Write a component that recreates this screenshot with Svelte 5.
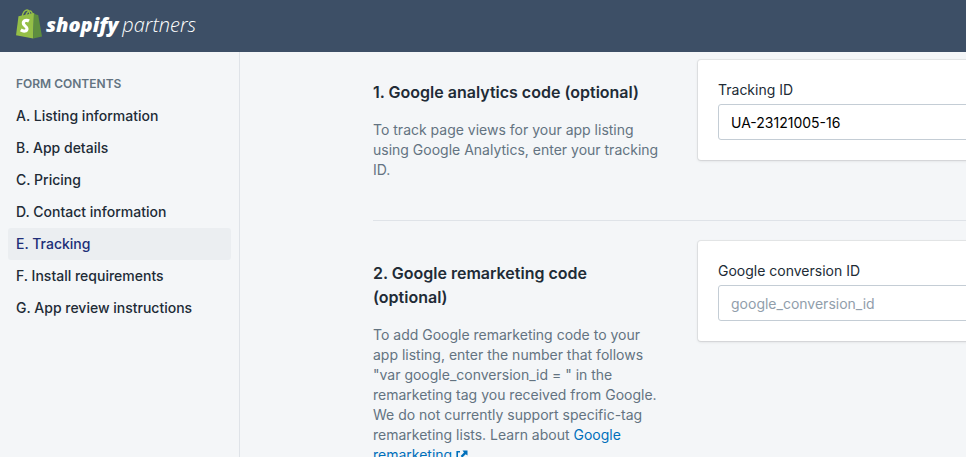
<script>
	let trackingId = 'UA-23121005-16';
	let conversionId = '';
	let current = 'tracking';

	const contents = [
		{ id: 'listing', label: 'A. Listing information' },
		{ id: 'details', label: 'B. App details' },
		{ id: 'pricing', label: 'C. Pricing' },
		{ id: 'contact', label: 'D. Contact information' },
		{ id: 'tracking', label: 'E. Tracking' },
		{ id: 'install', label: 'F. Install requirements' },
		{ id: 'review', label: 'G. App review instructions' }
	];
</script>

<div class="frame">
	<header>
		<a class="logo" href="#home">
			<svg class="bag" width="26" height="30" viewBox="0 0 26 30" aria-hidden="true">
				<path
					d="M6 8.500C6.600 4.200 8.800 1.200 11 1c2-.1 2.800 2.200 2.900 5.500M9.600 7.500c.8-3.300 2.500-5.500 4.400-5.500 1.400 0 2.200 1.500 2.500 4"
					fill="none"
					stroke="#95bf47"
					stroke-width="1.300"
				/>
				<path d="M2.500 7.300 18 4 17.200 29.500 0 26.300z" fill="#95bf47" />
				<path d="M18 4 19.700 5.600l2.500.3L26 27.600 17.200 29.500z" fill="#5e8e3e" />
				<path
					d="M13 12c-2.300-1.300-5.500-.6-5.700 2-.2 2.900 3.900 3.300 3.700 5.900-.2 2.400-3.400 2.800-6.200 1"
					fill="none"
					stroke="#fff"
					stroke-width="3.200"
				/>
			</svg>
			<span class="shopify">shopify</span>
			<span class="partners">partners</span>
		</a>
	</header>

	<div class="body">
		<nav aria-labelledby="contents-title">
			<h2 id="contents-title">Form contents</h2>
			<ul>
				{#each contents as item}
					<li>
						<a
							href="#{item.id}"
							class:active={current === item.id}
							on:click={() => (current = item.id)}>{item.label}</a
						>
					</li>
				{/each}
			</ul>
		</nav>

		<main>
			<section>
				<div class="about">
					<h3>1. Google analytics code (optional)</h3>
					<p>
						To track page views for your app listing using Google Analytics, enter your tracking ID.
					</p>
				</div>
				<div class="card">
					<label for="tracking-id">Tracking ID</label>
					<input id="tracking-id" type="text" bind:value={trackingId} />
				</div>
			</section>

			<section>
				<div class="about">
					<h3>2. Google remarketing code (optional)</h3>
					<p>
						To add Google remarketing code to your app listing, enter the number that follows "var
						google_conversion_id = " in the remarketing tag you received from Google. We do not
						currently support specific-tag remarketing lists. Learn about
						<a href="#remarketing"
							>Google remarketing
							<svg width="12" height="12" viewBox="0 0 12 12" aria-hidden="true">
								<path
									d="M4 1.800H1.200v9h8V8"
									fill="none"
									stroke="currentColor"
									stroke-width="1.600"
								/>
								<path d="M6.500 0.500h5V5.500L9.700 4.200 6.300 7.600 4.600 5.900 8 2.500z" fill="currentColor" />
							</svg></a
						>
					</p>
				</div>
				<div class="card">
					<label for="conversion-id">Google conversion ID</label>
					<input
						id="conversion-id"
						type="text"
						placeholder="google_conversion_id"
						bind:value={conversionId}
					/>
				</div>
			</section>
		</main>
	</div>
</div>

<style>
	:global(body) {
		background: #f4f6f8;
	}
	.frame {
		display: flex;
		flex-direction: column;
		height: 100vh;
		overflow: hidden;
		color: #212b36;
		font-family: Inter, 'Liberation Sans', sans-serif;
		font-size: 14px;
		line-height: 20px;
	}
	header {
		display: flex;
		flex: none;
		align-items: center;
		height: 52px;
		padding: 0 16px 4px;
		box-sizing: border-box;
		background: #3d4f66;
	}
	.logo {
		display: flex;
		align-items: center;
		gap: 4px;
		color: white;
		font-family: 'Open Sans', sans-serif;
		font-size: 20px;
		font-style: italic;
		line-height: 30px;
		text-decoration: none;
	}
	.logo span {
		padding-top: 2px;
	}
	.bag {
		flex: none;
	}
	.shopify {
		font-weight: 800;
	}
	.partners {
		font-weight: 300;
	}
	.body {
		display: flex;
		flex: 1;
		min-height: 0;
	}
	nav {
		flex: none;
		width: 240px;
		padding: 22px 8px;
		box-sizing: border-box;
		border-right: 1px solid #dfe3e8;
	}
	h2 {
		margin: 0;
		padding: 0 8px 6px;
		color: #637381;
		font-size: 12px;
		font-weight: 600;
		line-height: 20px;
		text-transform: uppercase;
	}
	ul {
		margin: 0;
		padding: 0;
		list-style: none;
	}
	nav a {
		display: block;
		padding: 6px 8px;
		border-radius: 3px;
		color: #212b36;
		font-weight: 500;
		text-decoration: none;
	}
	nav a.active {
		background: #ebeef1;
		color: #202e78;
	}
	main {
		flex: 1;
		min-width: 900px;
		padding: 8px 133px 0;
		box-sizing: border-box;
	}
	section {
		display: grid;
		grid-template-columns: 289px 1fr;
		gap: 36px;
		align-items: start;
		padding-bottom: 40px;
	}
	section + section {
		padding-top: 20px;
		border-top: 1px solid #dfe3e8;
	}
	.about {
		padding-top: 20px;
	}
	h3 {
		margin: 0 0 16px;
		font-size: 16px;
		font-weight: 600;
		line-height: 24px;
	}
	p {
		margin: 0;
		color: #637381;
	}
	p a {
		color: #006fbb;
		text-decoration: none;
	}
	p svg {
		vertical-align: -2px;
	}
	.card {
		padding: 20px;
		border-radius: 3px;
		background: white;
		box-shadow:
			0 0 0 1px rgba(63, 63, 68, 0.08),
			0 1px 3px rgba(63, 63, 68, 0.15);
	}
	label {
		display: block;
		margin-bottom: 4px;
	}
	input {
		display: block;
		width: 100%;
		height: 36px;
		padding: 0 12px;
		box-sizing: border-box;
		border: 1px solid #c4cdd5;
		border-radius: 3px;
		background: white;
		color: black;
		font: inherit;
	}
	input::placeholder {
		color: #919eab;
	}
</style>
